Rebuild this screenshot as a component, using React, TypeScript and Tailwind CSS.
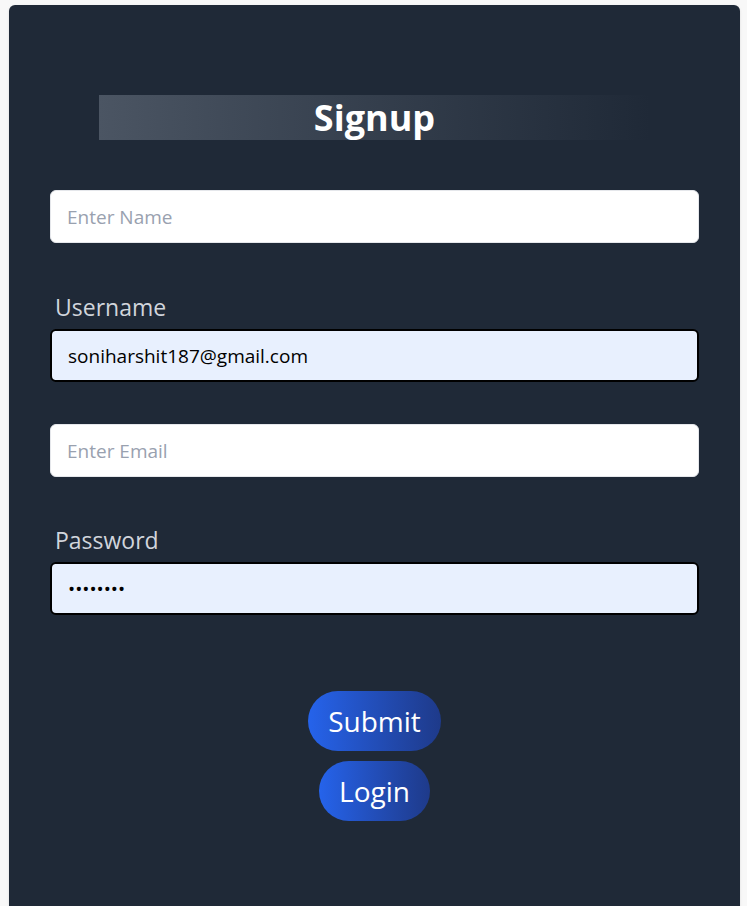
import React from 'react';

const Field: React.FC<{ placeholder: string; type?: string }> = ({ placeholder, type = 'text' }) => (
  <input
    type={type}
    placeholder={placeholder}
    className="block w-full h-[53px] rounded-md border border-gray-200 bg-white px-4 text-[19px] text-black placeholder:text-gray-400 outline-none"
  />
);

const FilledField: React.FC<{ label: string; value: string; type?: string }> = ({ label, value, type = 'text' }) => (
  <div>
    <label className="block pl-[5px] text-[23px] leading-[30px] text-gray-300 mb-[7px]">{label}</label>
    <input
      type={type}
      defaultValue={value}
      className="block w-full h-[53px] rounded-md border-2 border-black bg-[#e8f0fe] px-4 text-[19px] text-black outline-none"
    />
  </div>
);

const App: React.FC = () => {
  return (
    <div className="min-h-screen bg-[#f8f8f8] pt-[5px] pl-[9px] pr-[7px]" style={{ fontFamily: '"Open Sans", sans-serif' }}>
      <div className="bg-[#1f2937] rounded-md min-h-[910px] px-[41px] pt-[90px] shadow">
        {/* Title */}
        <div className="mx-[49px] h-[45px] bg-gradient-to-r from-[#4b5563] to-[#1f2937] flex items-center justify-center">
          <h1 className="text-[36px] font-bold text-white leading-none">Signup</h1>
        </div>

        <form className="mt-[50px]" onSubmit={e => e.preventDefault()}>
          <Field placeholder="Enter Name" />
          <div className="mt-[49px]">
            <FilledField label="Username" value="soniharshit187@gmail.com" />
          </div>
          <div className="mt-[42px]">
            <Field placeholder="Enter Email" />
          </div>
          <div className="mt-[48px]">
            <FilledField label="Password" value="harshit1" type="password" />
          </div>

          <div className="mt-[76px] flex flex-col items-center gap-[10px]">
            <button className="h-[60px] px-5 rounded-full bg-gradient-to-r from-[#2563eb] to-[#1e3a8a] text-white text-[28px]">
              Submit
            </button>
            <button className="h-[60px] px-5 rounded-full bg-gradient-to-r from-[#2563eb] to-[#1e3a8a] text-white text-[28px]">
              Login
            </button>
          </div>
        </form>
      </div>
    </div>
  );
};

export default App;
